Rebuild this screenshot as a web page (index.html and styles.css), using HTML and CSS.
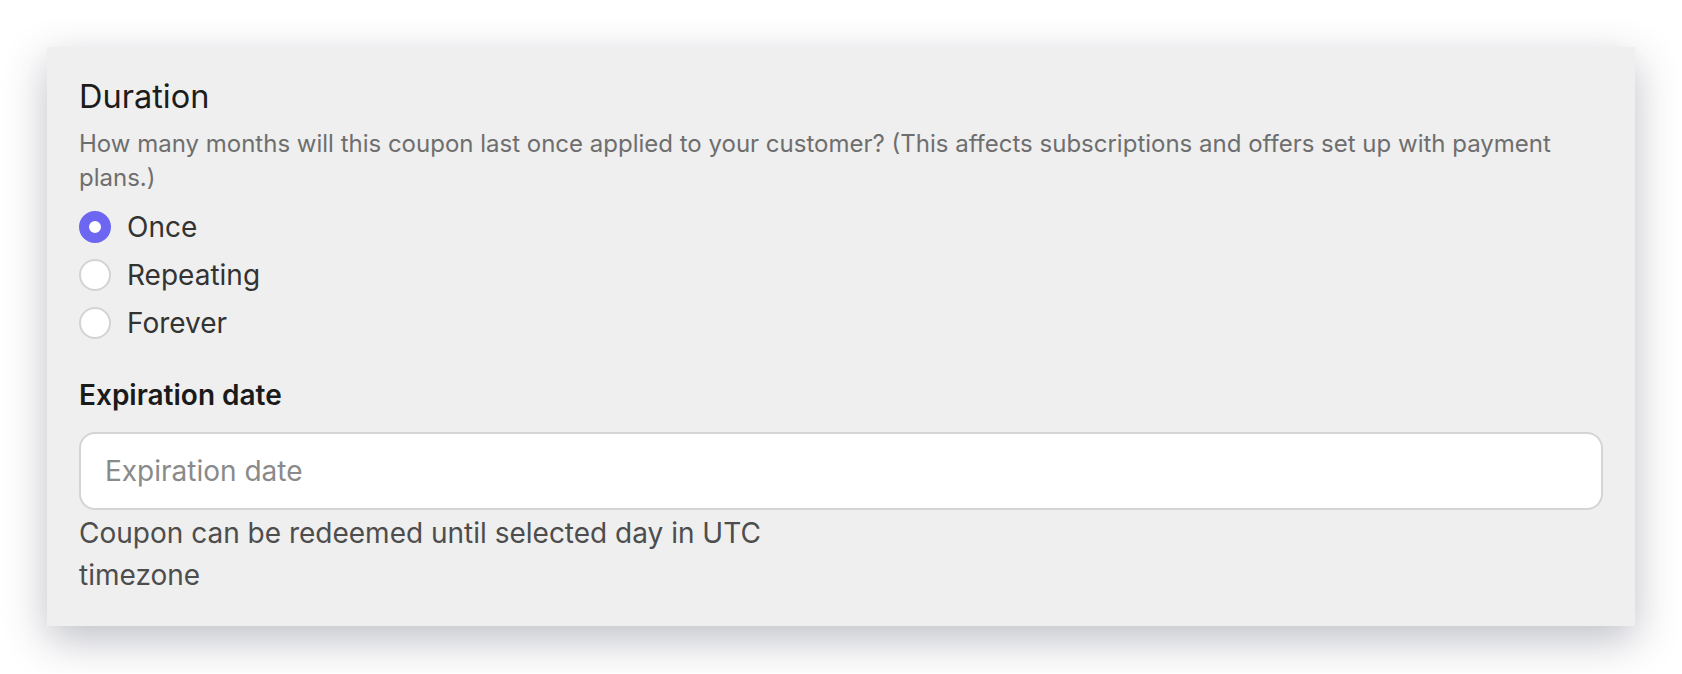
FILE: index.html
```html
<!DOCTYPE html>
<html lang="en-US">
    <head>
        <meta charset="utf-8">
        <link rel="stylesheet" href="styles.css">
    </head>
    <body>
        <div class="card">
            <h2 class="field-title">Duration</h2>
            <p class="field-desc">How many months will this coupon last once applied to your customer? (This affects subscriptions and offers set up with payment plans.)</p>
            <div class="radio-group">
                <label class="radio-row"><input type="radio" name="duration" checked>Once</label>
                <label class="radio-row"><input type="radio" name="duration">Repeating</label>
                <label class="radio-row"><input type="radio" name="duration">Forever</label>
            </div>
            <label class="field-label" for="expiration">Expiration date</label>
            <input class="text-input" id="expiration" type="text" placeholder="Expiration date">
            <p class="field-hint">Coupon can be redeemed until selected day in UTC timezone</p>
        </div>
    </body>
</html>
```

FILE: styles.css
```css
body{
    margin: 0;
    background-color: #fff;
    font-family: Inter, "Noto Sans", sans-serif;
}
div.card{
    margin: 47px;
    padding: 30px 32px 30px 32px;
    background-color: #efefef;
    box-shadow: 0 14px 40px rgba(55, 60, 80, 0.32);
}
h2.field-title{
    margin: 0;
    font-size: 32.5px;
    line-height: 40px;
    font-weight: 400;
    color: #1c1c1c;
}
p.field-desc{
    margin: 10px 0 0 0;
    font-size: 24px;
    line-height: 34px;
    color: #6e6e6e;
}
div.radio-group{
    margin-top: 8px;
    display: flex;
    flex-direction: column;
}
label.radio-row{
    height: 48px;
    display: flex;
    align-items: center;
    gap: 16px;
    font-size: 28px;
    color: #333;
}
label.radio-row input{
    appearance: none;
    margin: 0;
    width: 32px;
    height: 32px;
    box-sizing: border-box;
    border-radius: 50%;
    border: 2px solid #d3d3d3;
    background-color: #fff;
}
label.radio-row input:checked{
    border: 10px solid #6c66f0;
}
label.field-label{
    display: block;
    margin-top: 30px;
    font-size: 28px;
    line-height: 36px;
    font-weight: 600;
    color: #1a1a1a;
}
input.text-input{
    display: block;
    margin-top: 19px;
    width: 100%;
    height: 78px;
    box-sizing: border-box;
    padding: 0 24px;
    border: 2px solid #d4d4d4;
    border-radius: 16px;
    background-color: #fff;
    font-family: inherit;
    font-size: 28px;
    color: #333;
    outline: none;
}
input.text-input::placeholder{
    color: #8a8a8a;
}
p.field-hint{
    margin: 2px 0 0 0;
    width: 46%;
    font-size: 28px;
    line-height: 42px;
    color: #4d4d4d;
}
```
